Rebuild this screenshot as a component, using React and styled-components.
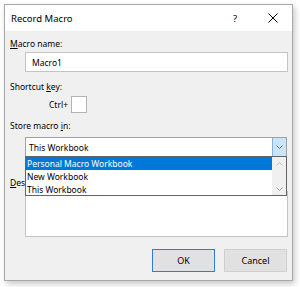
import React from 'react'
import styled, { createGlobalStyle } from 'styled-components'

const GlobalStyle = createGlobalStyle`
    html, body {
        margin: 0;
        padding: 0;
        background: #ffffff;
    }
    body {
        font-family: "Noto Sans", "Open Sans", sans-serif;
        font-size: 8.5px;
        color: #000000;
    }
`

const Page = styled.div`
    width: 300px;
    height: 287px;
    padding: 4px 0 0 4px;
    box-sizing: border-box;
    overflow: hidden;
`
const Dialog = styled.div`
    width: 289px;
    height: 277px;
    box-sizing: border-box;
    border: 1px solid #a8a8a8;
    background: #f0f0f0;
    box-shadow: 2px 3px 6px rgba(0, 0, 0, 0.22);
    display: flex;
    flex-direction: column;
`
const TitleBar = styled.div`
    height: 26px;
    background: #ffffff;
    display: flex;
    align-items: center;
    padding-left: 6px;
    flex-shrink: 0;
`
const Title = styled.div`
    flex: 1;
    font-size: 9.5px;
`
const TitleButton = styled.div`
    width: 26px;
    height: 26px;
    display: flex;
    align-items: center;
    justify-content: center;
    font-size: 9.5px;
    margin-right: ${props => props.mr || 0}px;
`
const Body = styled.div`
    flex: 1;
    display: flex;
    flex-direction: column;
    padding: 0 4px 0 5px;
`
const Label = styled.div`
    height: 12px;
    line-height: 12px;
    margin-top: ${props => props.mt}px;
    white-space: nowrap;
    u { text-decoration: underline; text-underline-offset: 1px; }
`
const TextInput = styled.div`
    margin: 2px 0 0 15px;
    height: 20px;
    box-sizing: border-box;
    border: 1px solid #c4c4c4;
    background: #ffffff;
    display: flex;
    align-items: center;
    padding-left: 6px;
`
const CtrlRow = styled.div`
    margin: 3px 0 0 39px;
    display: flex;
    align-items: center;
    gap: 3px;
`
const KeyBox = styled.div`
    width: 16px;
    height: 17px;
    box-sizing: border-box;
    border: 1px solid #b4b4b4;
    background: #ffffff;
`
const ComboWrap = styled.div`
    position: relative;
    margin: 5px 0 0 15px;
    width: 262px;
`
const Combo = styled.div`
    height: 20px;
    box-sizing: border-box;
    border: 1px solid #a0a0a0;
    background: #ffffff;
    display: flex;
    align-items: center;
`
const ComboText = styled.div`
    flex: 1;
    padding-left: 3px;
`
const ComboButton = styled.div`
    width: 14px;
    height: 18px;
    box-sizing: border-box;
    border-left: 1px solid #7eb4ea;
    background: #cce4f7;
    display: flex;
    align-items: center;
    justify-content: center;
`
const List = styled.div`
    position: absolute;
    top: 100%;
    left: 0;
    right: 0;
    height: 40px;
    box-sizing: border-box;
    margin-top: -1px;
    border: 1px solid #646464;
    background: #ffffff;
    display: flex;
    z-index: 2;
`
const Items = styled.div`
    flex: 1;
    display: flex;
    flex-direction: column;
`
const Item = styled.div`
    height: 13px;
    line-height: 13px;
    padding-left: 1px;
    background: ${props => (props.selected ? '#0078d7' : 'transparent')};
    color: ${props => (props.selected ? '#ffffff' : '#000000')};
`
const ScrollBar = styled.div`
    width: 14px;
    background: #f0f0f0;
    display: flex;
    flex-direction: column;
    justify-content: space-between;
    align-items: center;
    padding: 5px 0 4px;
    box-sizing: border-box;
`
const TextArea = styled.div`
    margin: 2px 0 0 15px;
    height: 46px;
    box-sizing: border-box;
    border: 1px solid #c4c4c4;
    background: #ffffff;
`
const Buttons = styled.div`
    margin-top: 12px;
    display: flex;
    justify-content: flex-end;
    gap: 9px;
    padding-right: 1px;
`
const Button = styled.div`
    width: 63px;
    height: 23px;
    box-sizing: border-box;
    border: 1px solid ${props => (props.primary ? '#2a7fd4' : '#cfcfcf')};
    background: #e1e1e1;
    display: flex;
    align-items: center;
    justify-content: center;
    font-size: 9px;
`

const Chevron = ({ up, color = '#606060' }) => (
    <svg width="7" height="4" viewBox="0 0 7 4">
        <path
            d={up ? 'M0.5 3.5 L3.5 0.5 L6.5 3.5' : 'M0.5 0.5 L3.5 3.5 L6.5 0.5'}
            fill="none"
            stroke={color}
            strokeWidth="1"
        />
    </svg>
)

const CloseIcon = () => (
    <svg width="10" height="10" viewBox="0 0 10 10">
        <path d="M0.5 0.5 L9.5 9.5 M9.5 0.5 L0.5 9.5" stroke="#000" strokeWidth="1" />
    </svg>
)

const App = () => (
    <Page>
        <GlobalStyle />
        <Dialog>
            <TitleBar>
                <Title>Record Macro</Title>
                <TitleButton mr={12}>?</TitleButton>
                <TitleButton mr={6}>
                    <CloseIcon />
                </TitleButton>
            </TitleBar>
            <Body>
                <Label mt={7}>
                    <u>M</u>acro name:
                </Label>
                <TextInput>Macro1</TextInput>
                <Label mt={9}>
                    Shortcut <u>k</u>ey:
                </Label>
                <CtrlRow>
                    <span>Ctrl+</span>
                    <KeyBox />
                </CtrlRow>
                <Label mt={7}>
                    Store macro <u>i</u>n:
                </Label>
                <ComboWrap>
                    <Combo>
                        <ComboText>This Workbook</ComboText>
                        <ComboButton>
                            <Chevron color="#5a6f85" />
                        </ComboButton>
                    </Combo>
                    <List>
                        <Items>
                            <Item selected>Personal Macro Workbook</Item>
                            <Item>New Workbook</Item>
                            <Item>This Workbook</Item>
                        </Items>
                        <ScrollBar>
                            <Chevron up color="#c0c0c0" />
                            <Chevron color="#a0a0a0" />
                        </ScrollBar>
                    </List>
                </ComboWrap>
                <Label mt={20}>
                    <u>D</u>escription:
                </Label>
                <TextArea />
                <Buttons>
                    <Button primary>OK</Button>
                    <Button>Cancel</Button>
                </Buttons>
            </Body>
        </Dialog>
    </Page>
)

export default App
